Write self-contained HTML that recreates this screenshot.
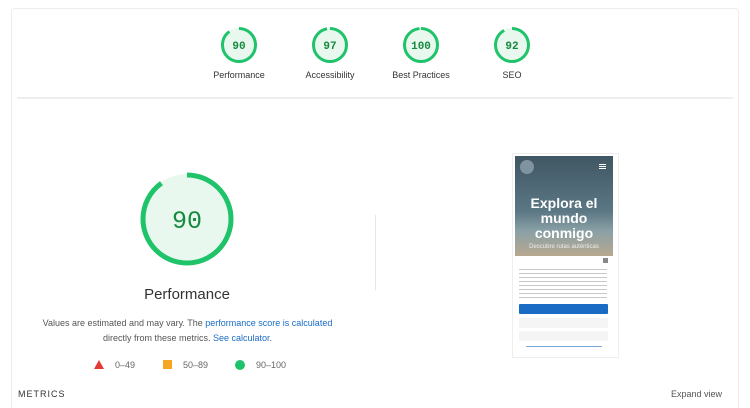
<!DOCTYPE html><html style="overflow:hidden;height:408px"><head><style>
body{margin:0;width:750px;height:408px;background:#fff;font-family:"Liberation Sans","DejaVu Sans",sans-serif;position:relative;overflow:hidden;color:#212121}
.card{position:absolute;left:11px;top:8px;width:728px;height:400px;border:1.5px solid #ececec;border-bottom:none;border-radius:4px 4px 0 0;box-sizing:border-box}
.a{position:absolute}
.g{position:absolute;text-align:center;width:90px}
.g svg{display:block;margin:0 auto}
.g .l{font-size:9px;color:#333;margin-top:6px}
.mono{font-family:"Liberation Mono","DejaVu Sans Mono",monospace}
</style></head><body>
<div class="card"></div>
<div class="a" style="left:17px;top:97px;width:716px;height:2px;background:#eee"></div>

<div class="g" style="left:194px;top:26px"><svg width="38" height="38"><circle cx="19" cy="19" r="17" fill="#e9f8ee"/><circle cx="19" cy="19" r="16.5" fill="none" stroke="#1ec36a" stroke-width="3" stroke-dasharray="93.3 103.7" transform="rotate(-90 19 19)"/><text x="19" y="23" text-anchor="middle" font-size="11" font-weight="bold" fill="#148a3f" class="mono">90</text></svg><div class="l">Performance</div></div>
<div class="g" style="left:285px;top:26px"><svg width="38" height="38"><circle cx="19" cy="19" r="17" fill="#e9f8ee"/><circle cx="19" cy="19" r="16.5" fill="none" stroke="#1ec36a" stroke-width="3" stroke-dasharray="100.5 103.7" transform="rotate(-90 19 19)"/><text x="19" y="23" text-anchor="middle" font-size="11" font-weight="bold" fill="#148a3f" class="mono">97</text></svg><div class="l">Accessibility</div></div>
<div class="g" style="left:376px;top:26px"><svg width="38" height="38"><circle cx="19" cy="19" r="17" fill="#e9f8ee"/><circle cx="19" cy="19" r="16.5" fill="none" stroke="#1ec36a" stroke-width="3" stroke-dasharray="102 103.7" transform="rotate(-90 19 19)"/><text x="19" y="23" text-anchor="middle" font-size="11" font-weight="bold" fill="#148a3f" class="mono">100</text></svg><div class="l">Best Practices</div></div>
<div class="g" style="left:467px;top:26px"><svg width="38" height="38"><circle cx="19" cy="19" r="17" fill="#e9f8ee"/><circle cx="19" cy="19" r="16.5" fill="none" stroke="#1ec36a" stroke-width="3" stroke-dasharray="95.4 103.7" transform="rotate(-90 19 19)"/><text x="19" y="23" text-anchor="middle" font-size="11" font-weight="bold" fill="#148a3f" class="mono">92</text></svg><div class="l">SEO</div></div>

<svg class="a" style="left:139px;top:171px" width="96" height="96"><circle cx="48" cy="48" r="45" fill="#e9f8ee"/><circle cx="48" cy="48" r="44" fill="none" stroke="#1ec36a" stroke-width="5" stroke-dasharray="248.8 276.5" transform="rotate(-90 48 48)"/><text x="48" y="57" text-anchor="middle" font-size="25" fill="#148a3f" class="mono">90</text></svg>
<div class="a" style="left:87px;top:286px;width:200px;text-align:center;font-size:15px;color:#333">Performance</div>
<div class="a" style="left:30px;top:316px;width:315px;text-align:center;font-size:9px;line-height:15px;color:#555">Values are estimated and may vary. The <span style="color:#1a6bc4">performance score is calculated</span><br>directly from these metrics. <span style="color:#1a6bc4">See calculator</span>.</div>
<svg class="a" style="left:94px;top:360px" width="10" height="9"><polygon points="5,0 10,9 0,9" fill="#e53935"/></svg>
<div class="a" style="left:115px;top:360px;font-size:9px;color:#666">0–49</div>
<div class="a" style="left:163px;top:360px;width:9px;height:9px;background:#f5a623"></div>
<div class="a" style="left:183px;top:360px;font-size:9px;color:#666">50–89</div>
<div class="a" style="left:235px;top:360px;width:10px;height:10px;border-radius:50%;background:#1ec36a"></div>
<div class="a" style="left:256px;top:360px;font-size:9px;color:#666">90–100</div>
<div class="a" style="left:18px;top:389px;font-size:9px;letter-spacing:1px;color:#333">METRICS</div>
<div class="a" style="left:671px;top:389px;font-size:9px;color:#555">Expand view</div>
<div class="a" style="left:375px;top:215px;width:1px;height:75px;background:#e6e6e6"></div>

<div class="a" style="left:512px;top:153px;width:105px;height:203px;border:1px solid #eee;background:#fff"></div>
<div class="a" style="left:515px;top:156px;width:98px;height:100px;background:linear-gradient(#405663,#5b7784 55%,#8aa0a6 75%,#b8a890)"></div>
<div class="a" style="left:520px;top:160px;width:14px;height:14px;border-radius:50%;background:#8093a0"></div>
<div class="a" style="left:599px;top:164px;width:7px;height:1px;background:#fff;box-shadow:0 2px #fff,0 4px #fff"></div>
<div class="a" style="left:515px;top:196px;width:98px;text-align:center;color:#fff;font-size:14px;line-height:15px;font-weight:bold">Explora el<br>mundo<br>conmigo</div>
<div class="a" style="left:515px;top:244px;width:98px;text-align:center;color:#eee;font-size:6px">Descubre rutas auténticas</div>
<div class="a" style="left:603px;top:258px;width:5px;height:5px;background:#888"></div>
<div class="a" style="left:519px;top:267px;width:88px;height:32px;background:repeating-linear-gradient(#fff 0 2px,#c8c8c8 2px 3px,#fff 3px 4px)"></div>
<div class="a" style="left:519px;top:304px;width:89px;height:10px;background:#1a6bc4;border-radius:1px"></div>
<div class="a" style="left:519px;top:318px;width:89px;height:10px;background:#f5f5f5"></div>
<div class="a" style="left:519px;top:331px;width:89px;height:10px;background:#f5f5f5"></div>
<div class="a" style="left:526px;top:346px;width:76px;height:1px;background:#7aa6d6"></div>
</body></html>
